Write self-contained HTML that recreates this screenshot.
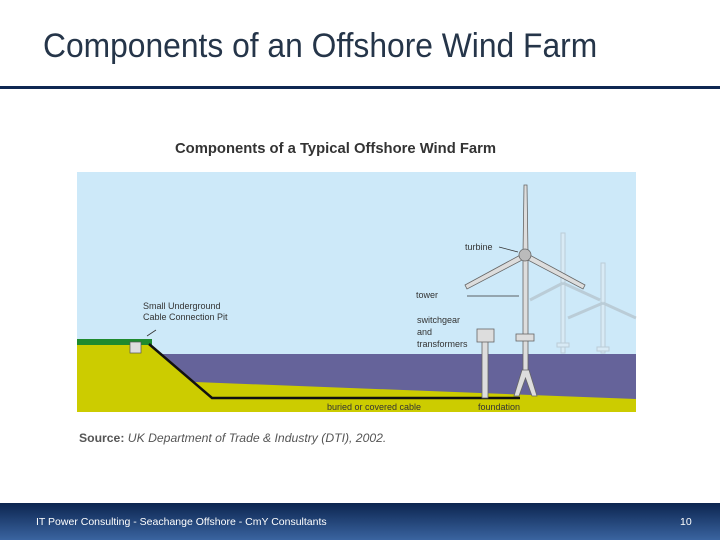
<!DOCTYPE html>
<html><head><meta charset="utf-8"><style>
body{margin:0;width:720px;height:540px;background:#fff;position:relative;overflow:hidden;font-family:"Liberation Sans",sans-serif}
.t{position:absolute;left:43px;top:27px;font-size:34px;color:#253549;white-space:nowrap;transform-origin:0 0;transform:scaleX(0.935)}
.bar{position:absolute;left:0;top:86px;width:720px;height:3px;background:#0e2752}
.foot{position:absolute;left:0;top:503px;width:720px;height:37px;background:linear-gradient(#0c2550,#3a64a0)}
.foot span{position:absolute;top:13px;font-size:10.5px;color:#fff}
</style></head><body>
<div class="t">Components of an Offshore Wind Farm</div>
<div class="bar"></div>
<div style="position:absolute;left:175px;top:141px;font-size:14.8px;font-weight:bold;color:#333">Components of a Typical Offshore Wind Farm</div>
<svg style="position:absolute;left:0;top:0" width="720" height="540">
<rect x="77" y="172" width="559" height="240" fill="#cde9f9"/>
<rect x="163" y="354" width="473" height="45" fill="#65639a"/>
<polygon points="77,345 152,345 195,382 636,399 636,412 77,412" fill="#cccc00"/>
<rect x="77" y="339" width="75" height="6" fill="#1f8a2e"/>
<rect x="130" y="342" width="11" height="11" fill="#ddd" stroke="#555" stroke-width="0.7"/>
<polyline points="149,344 212,398 520,398" fill="none" stroke="#111" stroke-width="2.5"/>
<g opacity="0.35" stroke="#999" fill="#eee" stroke-width="1">
<rect x="561" y="233" width="4" height="120"/><rect x="557" y="343" width="12" height="4"/>
<line x1="563" y1="283" x2="530" y2="300" stroke-width="3"/><line x1="563" y1="283" x2="600" y2="300" stroke-width="3"/>
<rect x="601" y="263" width="4" height="90"/><rect x="597" y="347" width="12" height="4"/>
<line x1="603" y1="303" x2="568" y2="318" stroke-width="3"/><line x1="603" y1="303" x2="636" y2="318" stroke-width="3"/>
</g>
<g stroke="#666" stroke-width="0.8" fill="#ddd">
<polygon points="465,285 524,253 526,258 467,289"/>
<polygon points="585,285 526,253 524,258 583,289"/>
<polygon points="523,254 524,185 527,185 528,254"/>
<rect x="523" y="255" width="5" height="118"/>
<rect x="516" y="334" width="18" height="7"/>
<polygon points="522,370 529,370 537,396 532,396 525.5,378 519,396 514,396"/>
<circle cx="525" cy="255" r="6" fill="#bbb"/>
<rect x="482" y="341" width="6" height="57"/>
<rect x="477" y="329" width="17" height="13"/>
</g>
<g stroke="#333" stroke-width="0.8"><line x1="467" y1="296" x2="519" y2="296"/><line x1="499" y1="247" x2="518" y2="252"/><line x1="147" y1="336" x2="156" y2="330"/></g>
<g font-size="9" fill="#333" font-family="Liberation Sans,sans-serif">
<text x="143" y="309">Small Underground</text><text x="143" y="320">Cable Connection Pit</text>
<text x="465" y="250">turbine</text><text x="416" y="298">tower</text>
<text x="417" y="323">switchgear</text><text x="417" y="335">and</text><text x="417" y="347">transformers</text>
<text x="327" y="410">buried or covered cable</text><text x="478" y="410">foundation</text>
</g>
</svg>
<div style="position:absolute;left:79px;top:431px;font-size:12.2px;color:#555"><b>Source:</b> <i>UK Department of Trade &amp; Industry (DTI), 2002.</i></div>
<div class="foot"><span style="left:36px">IT Power Consulting - Seachange Offshore - CmY Consultants</span><span style="left:680px">10</span></div>
</body></html>
